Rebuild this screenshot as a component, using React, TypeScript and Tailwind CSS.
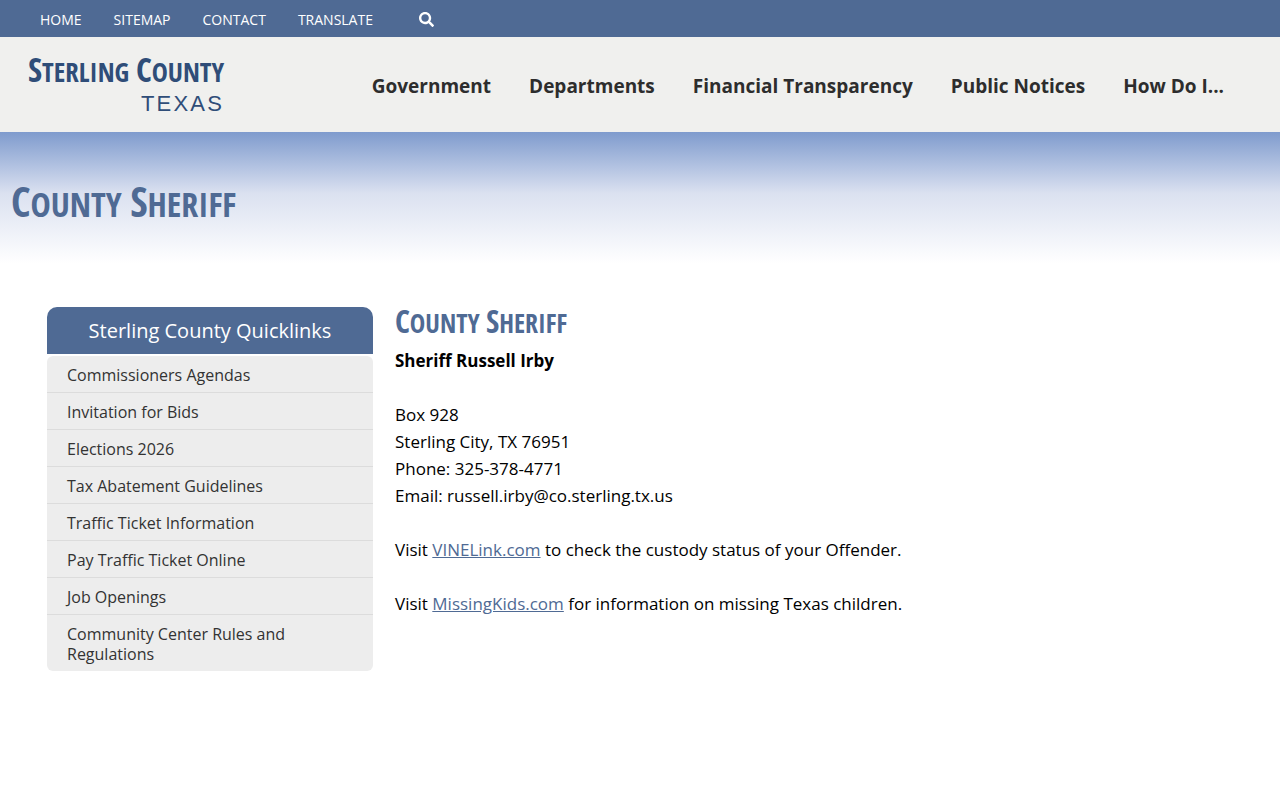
import { FaSearch } from "react-icons/fa";

const topLinks = ["Home", "Sitemap", "Contact", "Translate"];

const navItems = [
  "Government",
  "Departments",
  "Financial Transparency",
  "Public Notices",
  "How Do I...",
];

const quicklinks = [
  "Commissioners Agendas",
  "Invitation for Bids",
  "Elections 2026",
  "Tax Abatement Guidelines",
  "Traffic Ticket Information",
  "Pay Traffic Ticket Online",
  "Job Openings",
  "Community Center Rules and Regulations",
];

const TopBar = () => (
  <div className="flex h-[37px] items-center bg-[#4f6a94] pt-[2px] pl-10 text-white">
    <nav className="flex gap-8 text-sm uppercase">
      {topLinks.map((label) => (
        <a key={label} href="#" className="hover:underline">
          {label}
        </a>
      ))}
    </nav>
    <button type="button" aria-label="Search" className="ml-[46px] cursor-pointer">
      <FaSearch className="size-[15px]" />
    </button>
  </div>
);

const Header = () => (
  <header className="flex h-[95px] items-center justify-between bg-[#f0f0ee] pr-14 pb-1 pl-7">
    <a
      href="#"
      className="flex flex-col items-end font-['Open_Sans_Condensed','Roboto_Condensed',sans-serif] text-[#2f4d78]"
    >
      <span className="text-[27px] leading-10 uppercase">
        <span className="text-[34px]">S</span>terling <span className="text-[34px]">C</span>ounty
      </span>
      <span className="font-['Liberation_Sans',sans-serif] text-[22px] leading-6 tracking-widest">TEXAS</span>
    </a>
    <nav className="flex gap-[38px] pt-2 text-[19px] font-bold text-[#2d2d2d]">
      {navItems.map((label) => (
        <a key={label} href="#" className="hover:text-[#4f6a94]">
          {label}
        </a>
      ))}
    </nav>
  </header>
);

const Banner = () => (
  <section className="flex h-[136px] items-center bg-linear-to-b from-[#7f9bcd] via-[#dbe1f0] via-45% to-white to-97% px-[11px]">
    <h1 className="font-['Open_Sans_Condensed','Roboto_Condensed',sans-serif] text-[34px] text-[#4f6a94] uppercase">
      <span className="text-[42px]">C</span>ounty <span className="text-[42px]">S</span>heriff
    </h1>
  </section>
);

const Quicklinks = () => (
  <aside className="w-[326px] shrink-0">
    <h2 className="rounded-t-[10px] bg-[#4f6a94] text-center text-xl leading-[47px] text-white">
      Sterling County Quicklinks
    </h2>
    <ul className="mt-0.5 divide-y divide-[#dcdcdc] rounded-md bg-[#ededed] text-base leading-5 text-[#333]">
      {quicklinks.map((label) => (
        <li key={label}>
          <a href="#" className="block px-5 pt-[9px] pb-[7px] hover:underline">
            {label}
          </a>
        </li>
      ))}
    </ul>
  </aside>
);

const SheriffInfo = () => (
  <main className="min-w-0 flex-1 text-[17px] leading-[27px] text-black">
    <h2 className="font-['Open_Sans_Condensed','Roboto_Condensed',sans-serif] text-[26px] leading-7 text-[#4f6a94] uppercase">
      <span className="text-[32px]">C</span>ounty <span className="text-[32px]">S</span>heriff
    </h2>
    <p className="mt-[10px] font-bold">Sheriff Russell Irby</p>
    <p className="mt-[27px]">
      Box 928
      <br />
      Sterling City, TX 76951
      <br />
      Phone: 325-378-4771
      <br />
      Email: russell.irby@co.sterling.tx.us
    </p>
    <p className="mt-[27px]">
      Visit{" "}
      <a href="#" className="text-[#4f6a94] underline">
        VINELink.com
      </a>{" "}
      to check the custody status of your Offender.
    </p>
    <p className="mt-[27px]">
      Visit{" "}
      <a href="#" className="text-[#4f6a94] underline">
        MissingKids.com
      </a>{" "}
      for information on missing Texas children.
    </p>
  </main>
);

export default function App() {
  return (
    <div className="min-h-screen bg-white font-['Open_Sans','Noto_Sans',sans-serif]">
      <TopBar />
      <Header />
      <Banner />
      <div className="flex gap-[22px] px-[47px] pt-[39px] pb-12">
        <Quicklinks />
        <SheriffInfo />
      </div>
    </div>
  );
}
